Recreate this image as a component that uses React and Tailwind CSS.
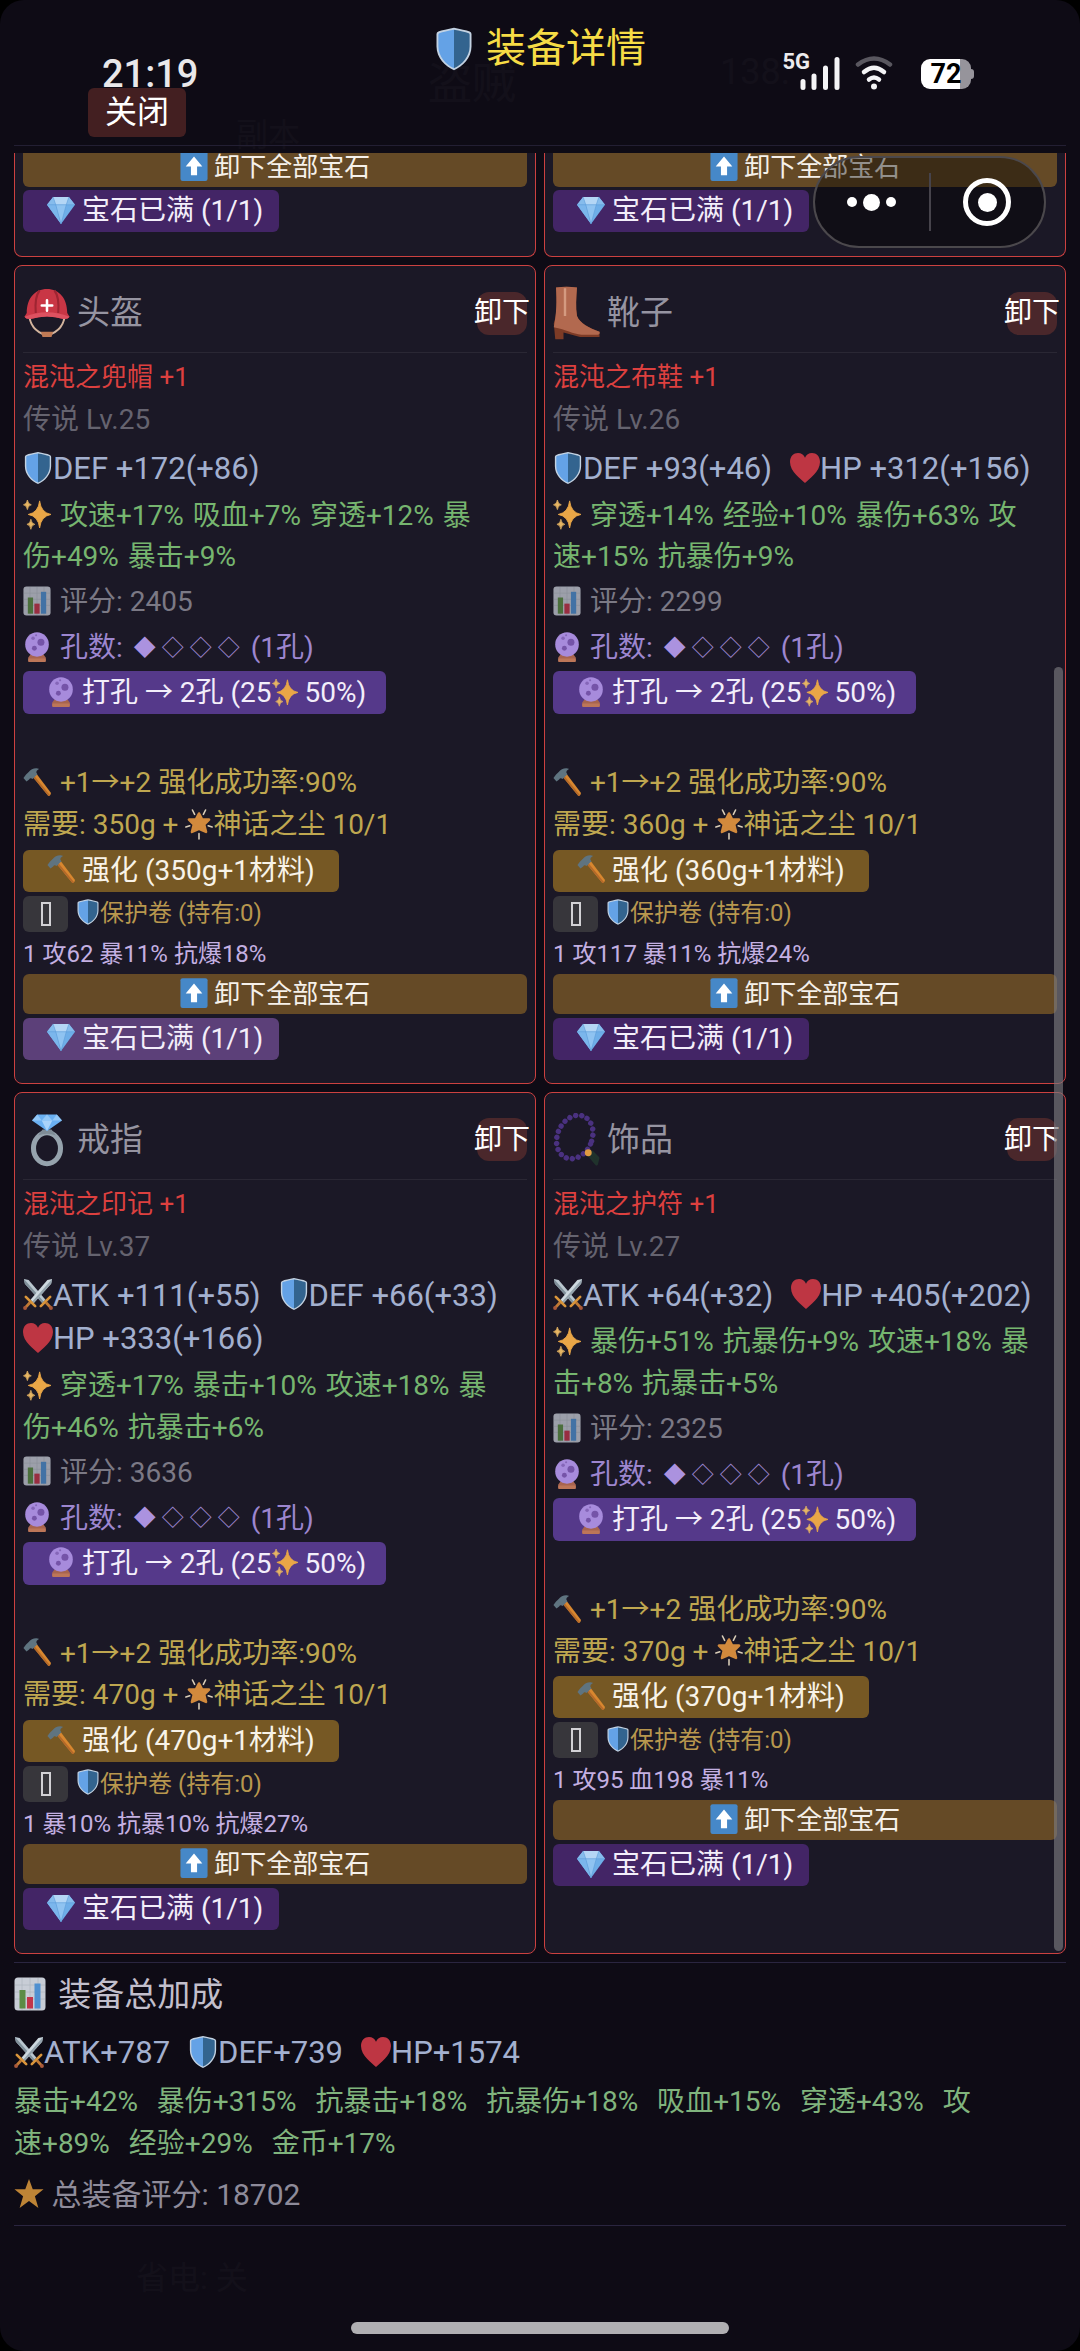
import { useState } from "react";
import clsx from "clsx";

/* ---------- icons, all on a 32x36 box ---------- */

const ICONS = {
  shield: (
    <>
      <path d="M16 1C11 2 6 3 3.500 4Q2 4.500 2 6V16C2 25 9 32 16 35C23 32 30 25 30 16V6Q30 4.500 28.500 4C26 3 21 2 16 1Z" fill="#c3d2e2" />
      <path d="M16 2.500C11 3.300 7 4.300 4.200 5.300Q3.500 5.500 3.500 6.500V16C3.500 24 9.500 30.500 16 33.400Z" fill="#64a2e6" />
      <path d="M16 2.500C21 3.300 25 4.300 27.800 5.300Q28.500 5.500 28.500 6.500V16C28.500 24 22.500 30.500 16 33.400Z" fill="#33648f" />
    </>
  ),
  heart: <path d="M16 34C12 30 0 22 0 11.500C0 5.500 4 2 8.500 2C12 2 14.800 4 16 7C17.200 4 20 2 23.500 2C28 2 32 5.500 32 11.500C32 22 20 30 16 34Z" fill="#be3643" />,
  swords: (
    <>
      <path d="M1 2L6 3L24 24L20.500 27.500L2 7Z" fill="#b9c6cf" />
      <path d="M1 2L22 26L20.500 27.500L2 7Z" fill="#7f8f99" />
      <path d="M31 2L26 3L8 24L11.500 27.500L30 7Z" fill="#cdd8df" />
      <path d="M31 2L10 26L11.500 27.500L30 7Z" fill="#93a2ac" />
      <path d="M3 21L13 31M29 21L19 31" stroke="#d9953b" strokeWidth="2.800" strokeLinecap="round" />
      <path d="M7.500 27L2.500 32.500M24.500 27L29.500 32.500" stroke="#c07a35" strokeWidth="3" />
      <circle cx="2.200" cy="33" r="2.100" fill="#a8583a" />
      <circle cx="29.800" cy="33" r="2.100" fill="#a8583a" />
    </>
  ),
  sparkles: (
    <>
      <path d="M19 3Q20.500 16.500 32 18.500Q20.500 20.500 19 34Q17.500 20.500 6 18.500Q17.500 16.500 19 3Z" fill="#e9a647" stroke="#e9a647" strokeLinejoin="round" />
      <path d="M5 2Q5.600 6.700 9.500 7.500Q5.600 8.300 5 13Q4.400 8.300 .5 7.500Q4.400 6.700 5 2Z" fill="#e6b563" stroke="#e6b563" strokeWidth=".8" />
      <path d="M9 24Q9.600 29 13.500 29.800Q9.600 30.600 9 35.500Q8.400 30.600 4.500 29.800Q8.400 29 9 24Z" fill="#e6b563" stroke="#e6b563" strokeWidth=".8" />
    </>
  ),
  chart: (
    <>
      <rect x=".5" y="1.500" width="31" height="33" rx="3.500" fill="#c8cdd6" />
      <path d="M1 9H31M1 16H31M1 23H31M8 2V34M16 2V34M24 2V34" stroke="#b0b8c2" strokeWidth=".8" />
      <rect x="5.500" y="14" width="6" height="18.500" fill="#5c8c45" />
      <rect x="13" y="21" width="6" height="11.500" fill="#c2364a" />
      <rect x="20.500" y="7.500" width="6" height="25" fill="#4f90d0" />
    </>
  ),
  ball: (
    <>
      <path d="M6 30L9 26H23L26 30V34Q26 35 24.500 35H7.500Q6 35 6 34Z" fill="#a8644f" />
      <path d="M6 31H26V34Q26 35 24.500 35H7.500Q6 35 6 34Z" fill="#bd7658" />
      <ellipse cx="16" cy="15" rx="13.500" ry="14" fill="#a78bdc" />
      <circle cx="20.500" cy="12.500" r="4" fill="#7554a8" />
      <circle cx="13" cy="19.500" r="2.800" fill="#7554a8" />
      <circle cx="11.500" cy="8" r="2" fill="#8566b8" />
      <circle cx="15" cy="4.500" r="1.200" fill="#8566b8" />
    </>
  ),
  hammer: (
    <>
      <path d="M11 12L15 8L32 30.500Q32 33.500 29 34Z" fill="#d8872f" />
      <path d="M11 12L12.500 10.500L31 33Q30 34 29 34Z" fill="#b4692a" />
      <path d="M.5 13.500L4 17.500L7 15C8 13.500 9 13 11 14.500L16.500 9C14.500 7 15 4.500 18.500 3C14 1 9 3.500 6.500 6.500L3.500 9.500Z" fill="#5f7480" />
    </>
  ),
  glow: (
    <>
      <path d="M16 6L19.300 12.500L27.500 13L21.800 18.500L24 27L16 23.500L8 27L10.200 18.500L4.500 13L12.700 12.500Z" fill="#d28a3d" stroke="#d28a3d" strokeWidth="3" strokeLinejoin="round" />
      <path d="M8.500 2L11 7M23.500 2L21 7M1 21.500L5.500 20M31 21.500L26.500 20M16 29V35" stroke="#d9cdb8" strokeWidth="1.800" strokeLinecap="round" />
    </>
  ),
  star: <path d="M16 2L20 13H31.500L22.300 20.500L26 33L16 25.500L6 33L9.700 20.500L.5 13H12Z" fill="#bd8436" />,
  gem: (
    <>
      <path d="M7 3H25L32 12L16 34L0 12Z" fill="#6eaee8" />
      <path d="M7 3L10 12H0ZM25 3L22 12H32Z" fill="#86bcec" />
      <path d="M7 3H25L22 12H10Z" fill="#b4d6f5" />
      <path d="M10 12H22L16 34Z" fill="#8fc3f1" />
      <path d="M0 12L16 34L10 12Z" fill="#7bb6ec" />
      <path d="M0 12H32M7 3L10 12L16 34L22 12L25 3" stroke="#5b9ad6" strokeWidth=".6" fill="none" />
    </>
  ),
  up: (
    <>
      <rect x=".5" y="1" width="31" height="34" rx="2.500" fill="#4688c8" />
      <path d="M16 7L25.500 18.500H19.500V28.500H12.500V18.500H6.500Z" fill="#fff" />
    </>
  ),
  helmet: (
    <>
      <path d="M4 17C4 27 9 31 16 33C23 31 28 27 28 17" stroke="#d3b49d" strokeWidth="1.400" fill="none" />
      <path d="M12 30.500H20L19 34H13Z" fill="#c07a55" />
      <path d="M2.500 18C2.500 8 8 2 16 2S29.500 8 29.500 18L31 20.500Q30 22 27 22Q16 18.500 5 22Q2 22 1 20.500Z" fill="#c93645" />
      <path d="M11 3C8 7 8 12 8.500 18M21 3C24 7 24 12 23.500 18" stroke="#9e2532" strokeWidth="1.400" fill="none" />
      <path d="M1 20.500Q16 14.500 31 20.500Q30 22.300 27 22Q16 18.500 5 22Q2 22.300 1 20.500Z" fill="#dd5160" />
      <path d="M16 9.500V16.500M12.500 13H19.500" stroke="#fff" strokeWidth="1.700" strokeLinecap="round" />
    </>
  ),
  boot: (
    <>
      <path d="M2 1Q9 0 16 1C15.500 8 15 14 16 20C18 25 24 28 31 30.500V34H18L7 31V35.500H1.500L.5 25C3 18 2.500 10 2 1Z" fill="#7d3b26" />
      <path d="M2 1Q9 0 16 1C15.500 8 15 14 16 20C18 25 24 28 31 30.500Q31.500 32 30 32.500H19C13 32 9 29 .5 27.500C2.500 18 2.500 10 2 1Z" fill="#b2694f" />
      <path d="M8 1.500V20" stroke="#d49a80" strokeWidth="1.600" />
    </>
  ),
  ring: (
    <>
      <ellipse cx="16" cy="23.500" rx="9" ry="10.300" fill="none" stroke="#96a3ad" strokeWidth="3.400" />
      <path d="M10 15L13 11H19L22 15Q16 12.500 10 15Z" fill="#7f8c96" />
      <path d="M9.500 1H22.500L26 5L16 12L6 5Z" fill="#6ab0f2" />
      <path d="M9.500 1L12.500 5H6ZM16 1L19.500 5H12.500ZM22.500 1L26 5H19.500Z" fill="#93c8f8" />
      <path d="M12.500 5H19.500L16 12Z" fill="#a9d3fa" />
    </>
  ),
  beads: (
    <>
      <ellipse cx="14.500" cy="16" rx="11.500" ry="15" transform="rotate(24 14.500 16)" fill="none" stroke="#4a3180" strokeWidth="3.600" strokeDasharray="0 4.050" strokeLinecap="round" />
      <path d="M24 28L29 34L30 30L26 26Z" fill="#20322c" stroke="#20322c" strokeWidth="2" strokeLinejoin="round" />
      <circle cx="23.500" cy="26.500" r="2.300" fill="#e09a41" />
    </>
  ),
};

function Icon({ name, className = "h-8 w-7" }) {
  return (
    <svg viewBox="0 0 32 36" aria-hidden="true" className={clsx("mb-1.5 inline-block shrink-0 align-middle", className)}>
      {ICONS[name]}
    </svg>
  );
}

/* ---------- data ---------- */

const STAT_ICON = { ATK: "swords", DEF: "shield", HP: "heart" };

const ITEMS = [
  {
    slot: "头盔", icon: "helmet", name: "混沌之兜帽 +1", level: 25,
    stats: [["DEF", " +172(+86)"]],
    affixes: ["攻速+17%", "吸血+7%", "穿透+12%", "暴伤+49%", "暴击+9%"],
    score: 2405, cost: 350, gems: "1 攻62 暴11% 抗爆18%", active: true,
  },
  {
    slot: "靴子", icon: "boot", name: "混沌之布鞋 +1", level: 26,
    stats: [["DEF", " +93(+46)"], ["HP", " +312(+156)"]],
    affixes: ["穿透+14%", "经验+10%", "暴伤+63%", "攻速+15%", "抗暴伤+9%"],
    score: 2299, cost: 360, gems: "1 攻117 暴11% 抗爆24%",
  },
  {
    slot: "戒指", icon: "ring", name: "混沌之印记 +1", level: 37,
    stats: [["ATK", " +111(+55)"], ["DEF", " +66(+33)"], ["HP", " +333(+166)"]],
    affixes: ["穿透+17%", "暴击+10%", "攻速+18%", "暴伤+46%", "抗暴击+6%"],
    score: 3636, cost: 470, gems: "1 暴10% 抗暴10% 抗爆27%",
  },
  {
    slot: "饰品", icon: "beads", name: "混沌之护符 +1", level: 27,
    stats: [["ATK", " +64(+32)"], ["HP", " +405(+202)"]],
    affixes: ["暴伤+51%", "抗暴伤+9%", "攻速+18%", "暴击+8%", "抗暴击+5%"],
    score: 2325, cost: 370, gems: "1 攻95 血198 暴11%",
  },
];

const TOTAL_STATS = [["ATK", "+787"], ["DEF", "+739"], ["HP", "+1574"]];
const TOTAL_AFFIXES = ["暴击+42%", "暴伤+315%", "抗暴击+18%", "抗暴伤+18%", "吸血+15%", "穿透+43%", "攻速+89%", "经验+29%", "金币+17%"];

/* ---------- pieces ---------- */

function Stats({ stats }) {
  return (
    <div className="flex flex-wrap gap-x-[18px] text-[31px] leading-[43px] text-[#a3b0cf]">
      {stats.map(([key, value]) => (
        <span key={key} className="whitespace-pre">
          <Icon name={STAT_ICON[key]} className="h-[34px] w-[30px]" />
          {key}
          {value}
        </span>
      ))}
    </div>
  );
}

// the value always stays on the line of the last character of its name
function Affixes({ list, gap = "mr-0.5" }) {
  return list.map((text) => {
    const cut = text.indexOf("+") - 1;
    return (
      <span key={text}>
        {text.slice(0, cut)}
        <span className={clsx("whitespace-nowrap", gap)}>{text.slice(cut)}</span>{" "}
      </span>
    );
  });
}

function GemButtons({ active }) {
  return (
    <>
      <button className="h-10 w-full rounded-md bg-[#654a26] text-[26px] leading-10 text-[#f6f1ea]">
        <Icon name="up" /> 卸下全部宝石
      </button>
      <button
        className={clsx(
          "mt-[3px] block h-[42px] rounded-md pr-4 pl-6 text-[28px] leading-[42px] text-[#f3eefa]",
          active ? "bg-[#5c4079]" : "bg-[#432566]"
        )}
      >
        <Icon name="gem" /> 宝石已满 (1/1)
      </button>
    </>
  );
}

function ItemCard({ item }) {
  const [protect, setProtect] = useState(false);

  return (
    <section className="rounded-lg border border-[#cc4140] bg-[#1b1826] px-2 pt-2 pb-[23px] text-[28px]">
      <div className="flex h-[79px] items-center justify-between border-b border-[#2a2734]">
        <h2 className="flex items-center gap-1.5 text-[33px] text-[#9694a1]">
          <Icon name={item.icon} className="mt-1.5 h-[54px] w-12" />
          {item.slot}
        </h2>
        <button className="flex h-[43px] w-[50px] items-center justify-center rounded-xl bg-[#4a272b] whitespace-nowrap text-white">
          卸下
        </button>
      </div>

      <p className="mt-0.5 text-[26px] leading-[44px] text-[#dd403f]">{item.name}</p>
      <p className="leading-[42px] text-[#65636f]">传说 Lv.{item.level}</p>
      <div className="mt-1.5">
        <Stats stats={item.stats} />
      </div>
      <p className="mt-1 leading-[41px] text-[#76b56f]">
        <Icon name="sparkles" className="mr-0.5 h-8 w-7" /> <Affixes list={item.affixes} />
      </p>
      <p className="mt-1 leading-[42px] text-[#7b7985]">
        <Icon name="chart" className="mr-0.5 h-8 w-7 opacity-75" /> 评分: {item.score}
      </p>
      <p className="mt-1 leading-[42px] text-[#9d86cf]">
        <Icon name="ball" className="mr-0.5 h-8 w-7" /> 孔数:{" "}
        <span className="mx-1 mb-1 inline-flex gap-1.5 align-middle text-[22px] leading-7">
          <span className="text-[#ab92df]">◆</span>
          <span>◇</span>
          <span>◇</span>
          <span>◇</span>
        </span>{" "}
        (1孔)
      </p>
      <button className="mt-0.5 block h-[43px] rounded-md bg-[#55398a] pr-5 pl-6 leading-[43px] text-[#f3eefa]">
        <Icon name="ball" /> 打孔 → 2孔 (25
        <Icon name="sparkles" className="h-[30px] w-[26px]" /> 50%)
      </button>

      <p className="mt-12 leading-[41px] text-[#bfa750]">
        <Icon name="hammer" className="mr-0.5 h-8 w-7" /> +1→+2 强化成功率:90%
      </p>
      <p className="leading-[41px] text-[#bfa750]">
        需要: {item.cost}g + <Icon name="glow" />
        神话之尘 10/1
      </p>
      <button className="mt-1 block h-[42px] rounded-md bg-[#765824] px-6 leading-[42px] text-[#f8f3e8]">
        <Icon name="hammer" /> 强化 ({item.cost}g+1材料)
      </button>

      <label className="mt-1 flex h-9 items-center gap-2 text-[24px] leading-9 text-[#b8974e]">
        <span className="relative h-9 w-[45px]">
          <input
            type="checkbox"
            checked={protect}
            onChange={(e) => setProtect(e.target.checked)}
            className="block size-full appearance-none rounded-md bg-[#37363b]"
          />
          <span className="pointer-events-none absolute inset-0 m-auto h-6 w-[10px] border-2 border-[#d2d1d5]" />
        </span>
        <span>
          <Icon name="shield" className="h-7 w-6" />
          保护卷 (持有:0)
        </span>
      </label>
      <p className="mt-[3px] text-[24px] leading-[38px] text-[#c4b0e2]">{item.gems}</p>
      <GemButtons active={item.active} />
    </section>
  );
}

function StatusIcons() {
  return (
    <div className="flex items-start justify-end pt-[52px] pr-[106px]">
      <span className="-mr-2.5 text-[22px] leading-[20px] font-bold text-[#ececee]">5G</span>
      <svg viewBox="0 0 40 34" className="mt-1 mr-[15px] h-[34px] w-10" aria-hidden="true">
        <path d="M3 25.500V31.500M14 20V31.500M25.500 12V31.500M37 3.500V31.500" stroke="#f4f4f6" strokeWidth="5" strokeLinecap="round" />
      </svg>
      <svg viewBox="0 0 38 34" className="mt-1 mr-7 h-[34px] w-[38px]" aria-hidden="true" fill="none" strokeLinecap="round" strokeWidth="4.500">
        <path d="M3 8.500Q19 -3.500 35 8.500" stroke="#59575f" />
        <path d="M9 16Q19 7.500 29 16" stroke="#f4f4f6" />
        <path d="M14 23.500Q19 19.500 24 23.500" stroke="#f4f4f6" />
        <circle cx="19" cy="30.500" r="3" fill="#f4f4f6" />
      </svg>
      <div className="mt-[7px] flex items-center">
        <div className="flex h-[30px] w-[50px] items-center justify-center rounded-[9px] bg-linear-to-r from-white from-78% to-[#96949b] to-78% text-[27px] leading-[30px] font-bold text-black">
          72
        </div>
        <div className="h-[10px] w-[3px] rounded-r-sm bg-[#96949b]" />
      </div>
    </div>
  );
}

// the mini-program menu that floats over the page
function Capsule() {
  return (
    <div className="absolute top-[156px] right-[34px] flex h-[92px] w-[233px] items-center rounded-full border-2 border-[#4b484c] bg-black/40">
      <button aria-label="更多" className="flex flex-1 items-center justify-center gap-1.5 text-white">
        <span className="size-[10px] rounded-full bg-white" />
        <span className="size-[17px] rounded-full bg-white" />
        <span className="size-[10px] rounded-full bg-white" />
      </button>
      <span className="h-[58px] w-0.5 bg-[#46434b]" />
      <button aria-label="关闭小程序" className="flex flex-1 items-center justify-center">
        <span className="flex size-12 items-center justify-center rounded-full border-5 border-white">
          <span className="size-[19px] rounded-full bg-white" />
        </span>
      </button>
    </div>
  );
}

// the game screen, all but hidden below the dialog
function Backdrop() {
  return (
    <div aria-hidden="true" className="pointer-events-none absolute inset-0 text-[32px] leading-10 text-white opacity-2">
      <span className="absolute top-[64px] left-[428px] text-[44px]">盗贼</span>
      <span className="absolute top-[52px] left-[720px] text-[36px]">138.</span>
      <span className="absolute top-[115px] left-[236px]">副本</span>
      <span className="absolute top-[2258px] left-[136px]">省电: 关</span>
    </div>
  );
}

export default function App() {
  return (
    <div className="bg-black font-[Roboto,'Noto_Sans_CJK_SC',sans-serif]">
      <div className="relative flex min-h-screen flex-col rounded-3xl bg-[#0e0b15]">
        <Backdrop />

        <header className="relative mx-3.5 grid grid-cols-[1fr_auto_1fr] items-start border-b border-[#231f33] pb-2">
          <div className="-mr-3.5 pt-14 pl-[74px]">
            <div className="pl-3.5 text-[38px] leading-9 font-medium text-[#e9e8ea]">21:19</div>
            <button className="-mt-1 block h-[49px] w-[98px] rounded-md bg-[#431f21] text-[32px] leading-[49px] text-white">
              关闭
            </button>
          </div>
          <h1 className="flex items-center gap-3 pt-5 text-[40px] leading-[48px] text-[#f6dc45]">
            <Icon name="shield" className="mt-1.5 h-[46px] w-10" />
            装备详情
          </h1>
          <div className="-mr-3.5">
            <StatusIcons />
          </div>
        </header>

        <main className="relative mx-3.5 mt-[7px] overflow-hidden">
          <div className="grid grid-cols-2 gap-2">
            {["left", "right"].map((side) => (
              <section key={side} className="-mt-1.5 rounded-b-lg border border-t-0 border-[#cc4140] bg-[#1b1826] px-2 pb-6">
                <GemButtons />
              </section>
            ))}
            {ITEMS.map((item) => (
              <ItemCard key={item.slot} item={item} />
            ))}
          </div>
          <div className="absolute top-[514px] right-[3px] bottom-[3px] w-[9px] rounded-full bg-[#7b7a7e]/65" />
        </main>

        <footer className="relative mx-3.5 mt-2 border-y border-[#2a2540] pt-2 pb-2">
          <h2 className="text-[33px] leading-[48px] text-[#c2bfcc]">
            <Icon name="chart" className="mr-1 h-9 w-8" /> 装备总加成
          </h2>
          <div className="mt-3">
            <Stats stats={TOTAL_STATS} />
          </div>
          <p className="mt-1.5 text-[28px] leading-[42px] text-[#80b47d]">
            <Affixes list={TOTAL_AFFIXES} gap="mr-3" />
          </p>
          <p className="mt-2 text-[30px] leading-[44px] text-[#8e8b9a]">
            <Icon name="star" className="h-[34px] w-[30px]" /> 总装备评分: 18702
          </p>
        </footer>

        <div className="mx-auto mt-auto mb-[17px] h-3 w-[35%] rounded-full bg-[#b0afb2]" />
        <Capsule />
      </div>
    </div>
  );
}
